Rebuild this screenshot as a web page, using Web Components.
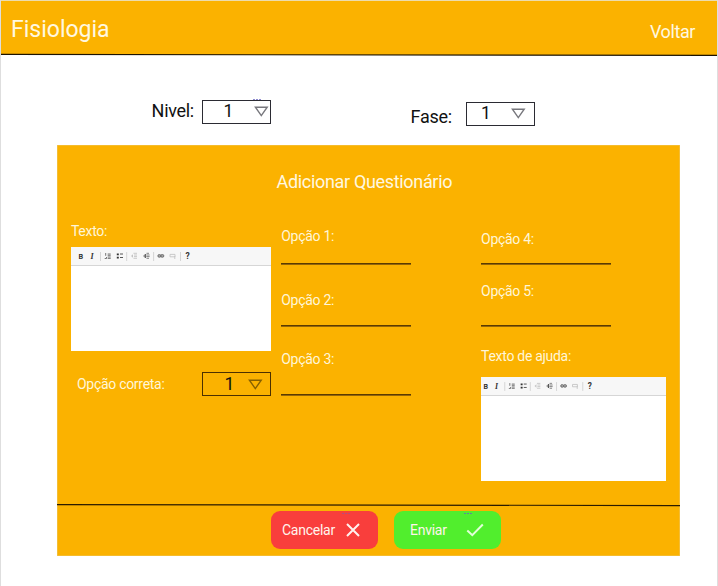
<!DOCTYPE html>
<html lang="pt">
<head>
<meta charset="utf-8">
<title>Fisiologia</title>
<style>
html,body{margin:0;height:586px;overflow:hidden;background:#fff}
body{font-family:Roboto,"Liberation Sans",sans-serif;color:#111}
</style>
</head>
<body>
<quiz-page></quiz-page>
<script>
function define(name, html) {
  const t = document.createElement('template');
  t.innerHTML = html;
  customElements.define(name, class extends HTMLElement {
    constructor() {
      super();
      this.attachShadow({mode: 'open'}).appendChild(t.content.cloneNode(true));
    }
  });
}

define('app-bar', `
<style>
:host{display:block;height:55px;background:#fbb200;color:#fff8e0;border-top:1px solid #ecdcae;box-sizing:border-box;width:716px}
.row{display:flex;justify-content:space-between;height:53px;padding:0 22px 0 10px;box-sizing:border-box}
.title{font-size:23px;line-height:30px;margin-top:14px}
.link{font-size:18px;line-height:24px;margin-top:19px;letter-spacing:-.4px}
svg{display:block;position:relative;top:-1px}
</style>
<div class="row"><span class="title"><slot name="title"></slot></span><span class="link"><slot name="link"></slot></span></div>
<svg width="716" height="3" overflow="visible"><path d="M0 1.4L716 2.4" stroke="#1c1300" stroke-width="1.1"/></svg>`);

define('drop-box', `
<style>
:host{display:flex;box-sizing:border-box;width:69px;height:24.5px;border:1.5px solid var(--edge,#2b2b33);align-items:flex-start;position:relative}
span{font-size:17.5px;line-height:20px;margin-left:var(--nx,21px);margin-top:var(--ny,0);width:10px}
svg{margin-left:var(--tx,20px);margin-top:var(--ty,5px);flex:none}
</style>
<span><slot></slot></span>
<svg width="15" height="12" viewBox="0 0 15 12"><path d="M1.4 1.2H13.2L7.3 9.6Z" fill="none" stroke="var(--tri,#77777d)" stroke-width="1.4"/></svg>`);

define('field-label', `
<style>:host{display:block;font-size:14px;line-height:20px;letter-spacing:-.29px;color:#fff6d8;white-space:nowrap}</style><slot></slot>`);

define('line-field', `
<style>
:host{display:flex;flex-direction:column;justify-content:space-between;width:130px;box-sizing:border-box}
i{display:block;height:2px;background:linear-gradient(#5a3a00 50%,#94660a 50%)}
</style>
<field-label><slot></slot></field-label><i></i>`);

define('rich-editor', `
<style>
:host{display:block;background:#fff;box-sizing:border-box;height:104.4px}
.bar{height:18px;background:#f7f7f7;border-bottom:1px solid #d6d6d6}
svg{display:block;overflow:visible;transform:translateX(var(--shift,0px)) scale(var(--zoom,1));transform-origin:0 9px}
text{font:bold 7.3px Roboto,sans-serif;fill:#333}
</style>
<div class="bar"><svg width="130" height="18" viewBox="0 0 130 18" fill="none" stroke="#555" stroke-width=".9">
<g stroke="none"><text x="7.6" y="11.6">B</text><text x="19.6" y="11.6" style="font-family:'Liberation Serif',serif;font-style:italic;font-size:8px">I</text><text x="114.6" y="11.8" style="font-size:8.5px">?</text></g>
<path d="M29.5 5v9M55.7 5v9M82.6 5v9M109.5 5v9" stroke="#ccc" stroke-width=".8"/>
<path d="M34.7 6v2.8M33.7 11.5h1.8v-1.5M36.7 7h3M36.7 8.3h3M36.7 10h3M36.7 11.4h3" stroke-width=".8"/>
<path d="M45.8 7.3h2M45.8 10.6h2" stroke="#333" stroke-width="1.7"/><path d="M49 7h3M49 10.5h3" stroke-width="1"/>
<g stroke="#c3c3c3"><path d="M62.5 6.3h3.5M63 8h3M63 9.6h3M62.5 11.3h3.5"/><path d="M60 9l2-1.7v3.4z" fill="#c3c3c3" stroke="none"/></g>
<path d="M75.5 6.3h2.5M75.3 8h3.3M75.3 9.6h3.3M75.5 11.3h2.5" stroke="#777"/><path d="M72.4 9h2.5M74.3 7v4" stroke="#555" stroke-width="1.2"/>
<rect x="86.9" y="7.6" width="3" height="2.6" rx="1.2" fill="#aaa" stroke="#666"/><rect x="89.8" y="7.6" width="3" height="2.6" rx="1.2" fill="#aaa" stroke="#666"/>
<path d="M99 7.4h5v2.4h-5zM103.8 9v3" stroke="#c4c4c4"/>
</svg></div>`);

define('action-button', `
<style>
:host{display:flex;align-items:center;justify-content:space-between;box-sizing:border-box;width:107.5px;height:38px;border-radius:9px;color:#fff4ec;font-size:14px;line-height:20px;letter-spacing:-.25px}
</style><slot></slot><slot name="icon"></slot>`);

define('dot-mark', `
<style>:host{display:block;position:absolute;width:8px;height:1px;line-height:0}svg{display:block}</style>
<svg width="8" height="1"><path d="M0 .5h8" stroke="#6864c0" stroke-width="1" stroke-dasharray="2 1" opacity=".75"/></svg>`);

define('quiz-page', `
<style>
:host{display:block;width:718px;height:586px;box-sizing:border-box;border:solid #dedede;border-width:0 1px}
.filters{display:flex;height:90px;box-sizing:border-box;font-size:18px;line-height:24px;letter-spacing:-.3px}
.filters>span{white-space:nowrap}
.panel{display:block;margin-left:55.6px;width:623px;height:411px;background:#fbb200;box-sizing:border-box;box-shadow:inset 0 0 0 .6px #efc65a}
.heading{font-size:18px;letter-spacing:-.33px;line-height:24px;height:75px;padding:25px 0 0 220px;box-sizing:border-box;color:#fff8e0;white-space:nowrap}
.cols{display:grid;grid-template-columns:210.3px 199.8px 186px;padding-left:14.4px;height:283px}
.c{display:flex;flex-direction:column;align-items:flex-start}
.row{display:flex;justify-content:space-between;width:193.6px;margin:20.4px 0 0 6px}
.rule{display:block;height:2px;overflow:visible}
.actions{display:flex;gap:15.5px;padding:6px 0 0 214.4px}
.ok{background:#51ee2d;padding:0 17px 0 16px}
.no{background:#f93e3c;padding:0 17px 0 11px}
</style>
<app-bar><span slot="title">Fisiologia</span><span slot="link">Voltar</span></app-bar>
<div class="filters">
 <span style="margin:44px 0 0 150.6px;width:50.8px">Nivel:</span>
 <drop-box style="margin-top:44.8px;--nx:20px;--tx:21px;--ty:5px">1</drop-box>
 <span style="margin:49.5px 0 0 139.2px;width:55.4px">Fase:</span>
 <drop-box style="margin-top:46.8px;--nx:14px">1</drop-box>
</div>
<div class="panel">
 <div class="heading">Adicionar Questionário</div>
 <div class="cols">
  <div class="c"><field-label style="margin-top:1px">Texto:</field-label>
   <rich-editor style="width:200px;margin-top:6px"></rich-editor>
   <div class="row"><field-label style="margin-top:2.2px">Opção correta:</field-label><drop-box style="--edge:#4c3000;--tri:#866000;--nx:22px;--tx:13px;--ny:1px;--ty:6px">1</drop-box></div>
  </div>
  <div class="c">
   <line-field style="margin-top:6px;height:39px">Opção 1:</line-field>
   <line-field style="margin-top:25px;height:37px">Opção 2:</line-field>
   <line-field style="margin-top:22px;height:47px">Opção 3:</line-field>
  </div>
  <div class="c">
   <line-field style="margin-top:9px;height:36px">Opção 4:</line-field>
   <line-field style="margin-top:16px;height:46px">Opção 5:</line-field>
   <field-label style="margin-top:19px">Texto de ajuda:</field-label>
   <rich-editor style="width:185.4px;margin-top:11px;--shift:-5px;--zoom:.975"></rich-editor>
  </div>
 </div>
 <svg class="rule" width="623" height="2"><path d="M0 1.6L623 2.6" stroke="#2a1b00" stroke-width="1.1"/></svg>
 <div class="actions">
  <action-button class="no">Cancelar<svg slot="icon" width="16" height="16" viewBox="0 0 16 16"><path d="M2 2L14 14M14 2L2 14" stroke="#fff2ee" stroke-width="2"/></svg></action-button>
  <action-button class="ok">Enviar<svg slot="icon" width="18" height="14" viewBox="0 0 18 14"><path d="M1.3 7.5L6.3 12.2L16.8 1.5" fill="none" stroke="#e2ffd9" stroke-width="2"/></svg></action-button>
 </div>
</div>
<dot-mark style="left:253px;top:99px"></dot-mark>
<dot-mark style="left:342px;top:513px;opacity:.6"></dot-mark>
<dot-mark style="left:464px;top:513px"></dot-mark>`);
</script>
</body>
</html>
